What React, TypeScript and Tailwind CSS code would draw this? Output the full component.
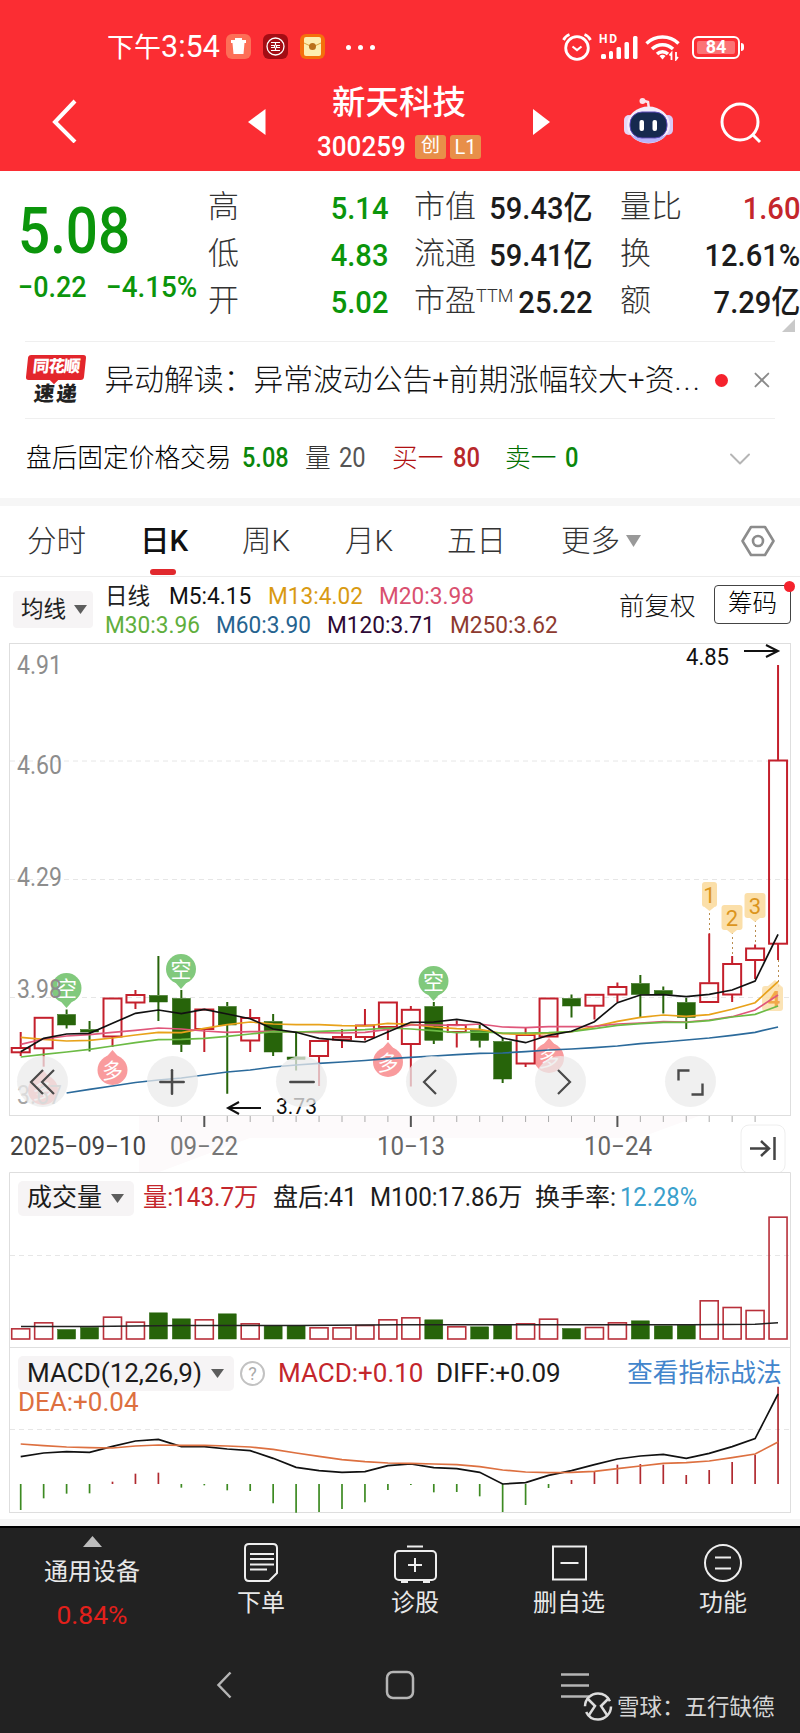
import type { ReactNode } from "react";
import { AlarmClock, ChevronDown, ChevronLeft, ChevronRight, ChevronsLeft, Minus, Plus, X } from "lucide-react";

const UP = "#c4202c";
const DOWN = "#27640a";

// [up, high, body top, body bottom, low]
const CANDLES: [number, number, number, number, number][] = [
  [1, 1032, 1047.5, 1052.3, 1056],
  [1, 1017.3, 1017.3, 1048.3, 1066.7],
  [0, 1009.5, 1014, 1025, 1028.5],
  [0, 1021, 1029, 1032, 1051.5],
  [1, 998, 998, 1036.5, 1047],
  [1, 990, 994.5, 1002.5, 1009],
  [0, 956, 995, 1002, 1021],
  [0, 990, 998, 1044.5, 1052],
  [1, 1009, 1009, 1029, 1052],
  [0, 1002, 1006, 1025, 1093.7],
  [1, 1009, 1017.5, 1040.5, 1052],
  [0, 1014, 1021, 1052, 1056],
  [0, 1033, 1056.5, 1059.5, 1070.5],
  [1, 1040.5, 1040.5, 1056, 1086],
  [1, 1029, 1036.5, 1039.5, 1048],
  [1, 1009, 1025, 1037, 1040.5],
  [1, 1002, 1002, 1027, 1040],
  [1, 1006, 1009.3, 1044, 1086.5],
  [0, 1002, 1006, 1040.3, 1044],
  [1, 1020.5, 1024.5, 1032, 1047.5],
  [0, 1024.5, 1030, 1040.5, 1047.5],
  [0, 1037.5, 1041, 1079, 1083],
  [1, 1027.5, 1034.5, 1063.5, 1067],
  [1, 998, 998, 1036.5, 1036.5],
  [0, 994.5, 998, 1006, 1017.5],
  [1, 994.3, 994.3, 1005.7, 1019.5],
  [1, 982.5, 986.5, 994.5, 1002],
  [0, 975, 983, 994.5, 1017.5],
  [0, 986.5, 990, 994.5, 1013.5],
  [0, 998, 1002, 1017.5, 1029],
  [1, 933.5, 982.7, 1002, 1002],
  [1, 956, 963.5, 994.5, 1002],
  [1, 944.5, 948, 960, 979],
  [1, 665, 760, 943.7, 960],
];

const MA_LINES = [
  { color: "#2b6a9b", ys: [0, 0, 1093, 1089.3, 1086, 1082.5, 1080, 1078, 1075, 1072, 1070, 1067, 1065, 1063.3, 1062, 1060.5, 1058.7, 1057.3, 1056, 1054.7, 1053.3, 1053, 1051.7, 1050, 1049, 1047.7, 1046, 1043.7, 1042, 1040, 1038, 1035.3, 1032.3, 1027] },
  { color: "#e8a21a", ys: [1037.3, 1039.3, 1041, 1040.3, 1038, 1035, 1032.3, 1032.7, 1028.3, 1024.7, 1022, 1024, 1024.7, 1024.7, 1025.7, 1026, 1023.3, 1024.3, 1027, 1028.7, 1029.3, 1033.7, 1034.3, 1033.3, 1031.7, 1026.7, 1021.3, 1017.3, 1015, 1016.3, 1014.7, 1009.3, 1002.7, 981.7] },
  { color: "#e0567a", ys: [1044.3, 1039, 1036, 1034.7, 1032.3, 1030.3, 1028, 1029, 1031, 1032.3, 1031.7, 1031.3, 1032, 1032.7, 1033, 1032.3, 1029.3, 1025, 1025, 1025.3, 1024, 1027, 1027.7, 1026.7, 1026.7, 1026.3, 1024, 1023, 1021.7, 1022, 1020, 1016.7, 1010, 995] },
  { color: "#6cbb45", ys: [1057, 1054.3, 1052, 1049.3, 1046, 1042.7, 1039.7, 1039.3, 1038.3, 1036.3, 1034, 1031.7, 1032, 1031.3, 1030.7, 1029.7, 1028, 1029, 1030.7, 1032.7, 1032, 1033, 1033, 1032.7, 1031.7, 1028.7, 1025.3, 1023.7, 1022.3, 1022.3, 1020.7, 1017, 1014.3, 1006] },
  { color: "#111", ys: [1051.7, 1038.3, 1034, 1033.3, 1023.3, 1013.3, 1010, 1013.7, 1009.3, 1014, 1018.7, 1029, 1032.3, 1038.3, 1040.3, 1042, 1032, 1022.3, 1022, 1019.3, 1022.7, 1038, 1042.7, 1035.3, 1031.3, 1021.7, 1002.7, 995, 994.7, 996.7, 994.3, 990, 981, 934.3] },
];

const VOLUMES = [32, 50, 30, 36, 67, 52, 80, 62, 59, 77, 47, 42, 42, 35, 35, 42, 59, 65, 59, 38, 38, 43, 47, 61, 33, 36, 50, 56, 41, 43, 116, 96, 87, 367];

const DIFF = [890, 879, 875, 877, 859, 843, 838, 860, 860, 867, 872, 895, 922, 932, 937, 935, 917, 912, 923, 926, 937, 972, 968, 946, 932, 914, 897, 888, 883, 895, 880, 860, 836, 702];
const DEA = [852, 857, 861, 863, 864, 858, 855, 856, 856, 858, 861, 868, 879, 889, 899, 905, 909, 910, 912, 914, 920, 930, 936, 938, 937, 934, 926, 918, 910, 908, 903, 893, 882, 846];
const HIST = [-78, -43, -29, -28, 7, 31, 34, -11, -4, -19, -21, -58, -86, -84, -75, -55, -18, -3, -25, -24, -37, -84, -63, -12, 12, 38, 58, 60, 58, 27, 42, 66, 88, 292];

const FONT = "font-['Roboto','Noto_Sans_CJK_SC',sans-serif]";

const cx = (i: number) => 20.7 + i * 22.95;
const points = (ys: number[]) =>
  ys
    .map((y, i) => (y ? `${cx(i)},${y}` : ""))
    .filter(Boolean)
    .join(" ");

function Label(props: { x: number; y: number; w: number; size: number; fill: string; children: string }) {
  return (
    <text x={props.x} y={props.y} fontSize={props.size} fill={props.fill} textLength={props.w} lengthAdjust="spacingAndGlyphs">
      {props.children}
    </text>
  );
}

function StatusBar() {
  return (
    <div className="flex h-[94px] items-center pl-[107px] pr-[56px] text-white">
      <span className="w-[119px] whitespace-nowrap text-[27px]">
        下午<span className="text-[30.5px]">3:54</span>
      </span>
      <svg className="h-[26px] w-[100px]" viewBox="0 0 100 26">
        <rect width="25" height="25" rx="6" fill="#fd6f57" />
        <path d="M5 6h15v3H5zM9 4h7v2H9zM6.500 9h12l-1 11h-10z" fill="#fff" />
        <rect x="37" width="25" height="25" rx="6" fill="#a30d14" />
        <circle cx="49.500" cy="12.500" r="8.500" fill="none" stroke="#fff" strokeWidth="1.300" />
        <path d="M45 8.500h9M45 16.500h9M49.500 8.500v3M49.500 13.500v3M45 11.500h3.500v2H45M54 11.500h-3.500v2H54" fill="none" stroke="#fff" strokeWidth="1.200" />
        <rect x="74" width="25" height="25" rx="6" fill="#f4700c" />
        <rect x="78" y="3" width="17" height="19" rx="2" fill="#fdeeb0" />
        <path d="M78 9l8.500 4L95 9" fill="none" stroke="#dfa53c" />
        <circle cx="86.500" cy="12.500" r="3.500" fill="#b9711b" />
      </svg>
      <div className="ml-[20px] flex gap-[7px]">
        <i className="size-[5px] rounded-full bg-white" />
        <i className="size-[5px] rounded-full bg-white" />
        <i className="size-[5px] rounded-full bg-white" />
      </div>
      <div className="ml-auto flex items-center">
        <svg className="h-[30px] w-[30px]" viewBox="0 0 30 30" fill="none" stroke="#fff" strokeWidth="2.800">
          <circle cx="15" cy="16" r="11.300" />
          <path d="M1.500 8q2-4 6-5.500M28.500 8q-2-4-6-5.500" />
          <path d="M10.500 14.500l4.500 3.500 4.500-3.500" strokeWidth="2.200" />
        </svg>
        <svg className="ml-[7px] h-[28px] w-[40px]" viewBox="0 0 40 28" fill="#fff">
          <text x="0" y="10" fontSize="12" fontWeight="700" textLength="18">HD</text>
          <rect x="2" y="21" width="5" height="5" rx="1.500" />
          <rect x="10" y="18" width="4" height="8" rx="1.500" />
          <rect x="17.500" y="14" width="4.500" height="12" rx="1.500" />
          <rect x="25.500" y="9" width="4.500" height="17" rx="1.500" />
          <rect x="34" y="3" width="4.500" height="23" rx="1.500" />
        </svg>
        <svg className="ml-[6px] h-[28px] w-[36px]" viewBox="0 0 36 28" fill="none" stroke="#fff" strokeWidth="3.400">
          <path d="M1.500 10.500a23 23 0 0 1 32 0" />
          <path d="M7 16a15 15 0 0 1 21 0" />
          <path d="M12 21a8 8 0 0 1 11 0" />
          <path d="M17.500 26.500l-3-3.500a4.500 4.500 0 0 1 6 0z" fill="#fff" stroke="none" />
          <path d="M26.500 27v-7l-2 2.500M31 19v7.500l2-2.500" strokeWidth="1.800" />
        </svg>
        <div className="ml-[11px] flex h-[23px] w-[48px] items-center rounded-[6px] border-2 border-white p-[3px]">
          <div className="flex h-full w-full items-center justify-center rounded-[2px] bg-[#fb7375] text-[18px] font-bold leading-none">84</div>
        </div>
        <i className="ml-[1px] h-[8px] w-[3px] rounded-r bg-white" />
      </div>
    </div>
  );
}

function TitleBar() {
  return (
    <div className="flex h-[77px] items-center text-white">
      <svg className="ml-[50px] mb-[26px] h-[46px] w-[28px]" viewBox="0 0 28 46" fill="none" stroke="#fff" strokeWidth="4">
        <path d="M25 4L5 25l20 20" />
      </svg>
      <svg className="ml-[170px] mb-[22px] h-[26px] w-[18px]" viewBox="0 0 18 26" fill="#fff">
        <path d="M17.500 0v26L0 13z" />
      </svg>
      <div className="ml-[45px] mb-[14px] flex w-[176px] flex-col items-center">
        <div className="h-[42px] text-[33.5px] font-medium leading-[42px]">新天科技</div>
        <div className="flex h-[46px] w-[164px] items-center">
          <span className="w-[98px]">
            <span className="inline-block origin-left scale-x-[0.93] text-[28px] font-medium">300259</span>
          </span>
          <span className="flex h-[24px] w-[31px] items-center justify-center rounded-[3px] bg-[#e88f49] text-[19px]">创</span>
          <span className="ml-[4px] flex h-[24px] w-[31px] items-center justify-center rounded-[3px] bg-[#e88f49] text-[20px]">L1</span>
        </div>
      </div>
      <svg className="ml-[46px] mb-[22px] h-[26px] w-[18px]" viewBox="0 0 18 26" fill="#fff">
        <path d="M0 0v26l17-13z" />
      </svg>
      <svg className="ml-[73px] mb-[23px] h-[48px] w-[50px]" viewBox="0 0 50 48">
        <path d="M17 3l7 2 1 7" fill="none" stroke="#fbe3ec" strokeWidth="2.500" />
        <circle cx="18.500" cy="4" r="3" fill="#fbe3ec" />
        <rect x="0" y="18" width="10" height="20" rx="5" fill="#e6d7f7" />
        <rect x="39" y="18" width="10" height="20" rx="5" fill="#d9c9f5" />
        <ellipse cx="24.500" cy="28" rx="21.500" ry="18.500" fill="#f4ecfb" />
        <path d="M6 37c8 12 29 12 37 0-8 6-29 6-37 0z" fill="#b9b4fa" />
        <rect x="6" y="15" width="37" height="26" rx="12" fill="#16294f" stroke="#5a49b8" strokeWidth="1" />
        <rect x="15.500" y="23" width="4.500" height="11" rx="2" fill="#fff" />
        <rect x="28.500" y="23" width="4.500" height="11" rx="2" fill="#fff" />
      </svg>
      <svg className="ml-[46px] mb-[20px] h-[42px] w-[42px]" viewBox="0 0 42 42" fill="none" stroke="#fff" strokeWidth="3">
        <circle cx="20" cy="20" r="18" />
        <path d="M32 32l8 8" />
      </svg>
    </div>
  );
}

function Stat(props: { label: ReactNode; value: string; color: string }) {
  return (
    <div className="flex h-[47px] items-center justify-between whitespace-nowrap">
      <span className="w-0 text-[31px] font-light text-[#333]">{props.label}</span>
      <span className={`${props.color} inline-block origin-right scale-x-[0.91] text-[32px] font-medium`}>{props.value}</span>
    </div>
  );
}

function Quote() {
  return (
    <div className="relative flex h-[170px] pt-[13px]">
      <div className="w-[208px] pl-[18px] text-[#0b950b] whitespace-nowrap">
        <div className="h-[70px] w-[128px] origin-left scale-x-[0.87] pt-[12px] text-[65px] font-medium leading-[70px]">5.08</div>
        <div className="mt-[13px] flex text-[29px] font-medium leading-[40px]">
          <span className="w-[88px]">
            <span className="inline-block origin-left scale-x-[0.93]">−0.22</span>
          </span>
          <span className="inline-block origin-left scale-x-[0.96]">−4.15%</span>
        </div>
      </div>
      <div className="w-[180px]">
        <Stat label="高" value="5.14" color="text-[#0b950b]" />
        <Stat label="低" value="4.83" color="text-[#0b950b]" />
        <Stat label="开" value="5.02" color="text-[#0b950b]" />
      </div>
      <div className="ml-[26px] w-[179px]">
        <Stat label="市值" value="59.43亿" color="text-[#1c1c1c]" />
        <Stat label="流通" value="59.41亿" color="text-[#1c1c1c]" />
        <Stat label={<>市盈<sup className="text-[18px]">TTM</sup></>} value="25.22" color="text-[#1c1c1c]" />
      </div>
      <div className="ml-[27px] w-[180px]">
        <Stat label="量比" value="1.60" color="text-[#c4262c]" />
        <Stat label="换" value="12.61%" color="text-[#1c1c1c]" />
        <Stat label="额" value="7.29亿" color="text-[#1c1c1c]" />
      </div>
      <svg className="absolute right-[5px] bottom-[9px] size-[13px]" viewBox="0 0 13 13">
        <path d="M13 0v13H0z" fill="#c9c9c9" />
      </svg>
    </div>
  );
}

function News() {
  return (
    <div className="mx-[25px] flex h-[78px] items-center border-y border-[#efefef]">
      <div className="relative flex w-[62px] flex-col items-center">
        <div className="flex h-[25px] w-[58px] -skew-x-6 items-center justify-center rounded-[3px] bg-[#e3262c] text-[16.5px] font-black leading-none tracking-[-1px] text-white">
          同花顺
        </div>
        <i className="absolute top-[22px] left-[26px] size-[6px] rotate-45 bg-[#e3262c]" />
        <div className="mt-[3px] flex -skew-x-6 gap-[2px] text-[20.500px] font-black leading-[22px] text-[#222]">
          <span>速</span>
          <span>递</span>
        </div>
      </div>
      <div className="ml-[18px] w-[604px] overflow-hidden whitespace-nowrap text-[29.8px] font-light text-[#111]">
        异动解读：异常波动公告+前期涨幅较大+资<span className="tracking-[2px]">...</span>
      </div>
      <i className="ml-[12px] size-[13px] rounded-full bg-[#f5222d]" />
      <X className="ml-[21px]" size={26} strokeWidth={1.700} color="#8a8a8a" />
    </div>
  );
}

function AfterHours() {
  return (
    <div className="flex h-[79px] items-center whitespace-nowrap pl-[26px] text-[25.7px] text-[#222]">
      <span className="w-[216px] font-light text-black">盘后固定价格交易</span>
      <span className="w-[63px] text-[27px] font-medium text-[#0b870b]">
        <span className="inline-block origin-left scale-x-[0.87]">5.08</span>
      </span>
      <span className="w-[34px] font-light text-[#333]">量</span>
      <span className="w-[53px] text-[27px] text-[#555]">
        <span className="inline-block origin-left scale-x-[0.88]">20</span>
      </span>
      <span className="w-[61px] font-light text-[#b01012]">买一</span>
      <span className="w-[52px] text-[27px] font-medium text-[#b8282a]">
        <span className="inline-block origin-left scale-x-[0.88]">80</span>
      </span>
      <span className="w-[60px] font-light text-[#006f00]">卖一</span>
      <span className="w-[40px] text-[27px] font-medium text-[#0b870b]">
        <span className="inline-block origin-left scale-x-[0.88]">0</span>
      </span>
      <ChevronDown className="ml-[117px]" size={36} strokeWidth={1.300} color="#b5b5b5" />
    </div>
  );
}

function Tabs() {
  return (
    <div className="flex h-[71px] items-center border-b border-[#ececec] pl-[27px] text-[29.5px] font-light text-[#333]">
      <span className="w-[113px]">分时</span>
      <span className="relative w-[102px] font-medium text-[#111]">
        日K
        <i className="absolute top-[50px] left-[10px] h-[6px] w-[26px] rounded-full bg-[#e1282d]" />
      </span>
      <span className="w-[103px]">周K</span>
      <span className="w-[102px]">月K</span>
      <span className="w-[114px]">五日</span>
      <span className="w-[65px]">更多</span>
      <svg className="h-[12px] w-[15px]" viewBox="0 0 15 12">
        <path d="M0 0h15l-7.500 12z" fill="#999" />
      </svg>
      <svg className="ml-[100px] h-[32px] w-[34px]" viewBox="0 0 34 32" fill="none" stroke="#8c8c8c" strokeWidth="2.600">
        <path d="M10 2h14l8.500 14L24 30H10L1.500 16z" strokeLinejoin="round" />
        <circle cx="17" cy="16" r="5" />
      </svg>
    </div>
  );
}

function Caret() {
  return (
    <svg className="h-[9px] w-[13px]" viewBox="0 0 13 9">
      <path d="M0 0h13L6.500 9z" fill="#5d5d5d" />
    </svg>
  );
}

function Legend() {
  const ma = "inline-block origin-left scale-x-[0.925]";
  return (
    <div className="flex h-[66px] text-[24.500px] whitespace-nowrap">
      <div className="mt-[14px] ml-[13px] flex h-[37px] w-[80px] items-center gap-[8px] rounded-[4px] bg-[#f6f4f5] pl-[8px] text-[22.5px] text-[#222]">
        均线
        <Caret />
      </div>
      <div className="ml-[12px] w-[490px] pt-[5px]">
        <div className="flex h-[29px] items-center">
          <span className="w-[64px] text-[22.5px] text-[#222]">日线</span>
          <span className="w-[99px] text-[#111]"><span className={ma}>M5:4.15</span></span>
          <span className="w-[111px] text-[#d99a12]"><span className={ma}>M13:4.02</span></span>
          <span className="text-[#d9506f]"><span className={ma}>M20:3.98</span></span>
        </div>
        <div className="flex h-[29px] items-center">
          <span className="w-[111px] text-[#5fae3d]"><span className={ma}>M30:3.96</span></span>
          <span className="w-[111px] text-[#26638f]"><span className={ma}>M60:3.90</span></span>
          <span className="w-[123px] text-[#2e0a35]"><span className={ma}>M120:3.71</span></span>
          <span className="text-[#8d3a2f]"><span className={ma}>M250:3.62</span></span>
        </div>
      </div>
      <div className="mt-[9px] ml-[24px] flex h-[40px] w-[95px] items-center text-[25.500px] font-light text-[#111]">前复权</div>
      <div className="relative mt-[8px] flex h-[39px] w-[77px] items-center justify-center rounded-[4px] border border-[#444] text-[24.500px] font-light text-black">
        筹码
        <i className="absolute -top-[5px] -right-[5px] size-[11px] rounded-full bg-[#f5222d]" />
      </div>
    </div>
  );
}

function Pin(props: { x: number; y: number; up?: boolean; children: string }) {
  const { x, y, up } = props;
  return (
    <g opacity="0.85">
      <circle cx={x} cy={y} r="15" fill={up ? "#f98a8c" : "#6cc066"} />
      <path d={up ? `M${x - 7} ${y - 12}L${x} ${y - 20}l7 8z` : `M${x - 7} ${y + 12}L${x} ${y + 20}l7-8z`} fill={up ? "#f98a8c" : "#6cc066"} />
      <text x={x} y={y + 8} fontSize="21" fill="#fff" textAnchor="middle">
        {props.children}
      </text>
    </g>
  );
}

function Flag(props: { x: number; y: number; w: number; children: string }) {
  const { x, y, w } = props;
  return (
    <g>
      <rect x={x - w / 2} y={y} width={w} height="25" rx="3" fill="#fbdfa9" />
      <path d={`M${x - 5} ${y + 25}l5 4 5-4z`} fill="#fbdfa9" />
      <text x={x} y={y + 21} fontSize="22" fill="#dc951d" textAnchor="middle">
        {props.children}
      </text>
    </g>
  );
}

// viewBoxes keep the y values of the page, so data and frames share one scale
function PriceChart() {
  return (
    <svg className="block h-[529px] w-[800px]" viewBox="0 643 800 529">
      <path d="M139 1116h560l-60 22H250l-96 36h-15z" fill="#fdfafb" />
      <path d="M10 761H790M10 879.500H790M10 997.500H790" stroke="#e6e6e6" strokeDasharray="5 4" />
      <rect x="9.500" y="643.500" width="781" height="472" fill="none" stroke="#dedede" />
      <Label x={17} y={674} w={45} size={25} fill="#8d8d8d">4.91</Label>
      <Label x={17} y={774} w={45} size={25} fill="#8d8d8d">4.60</Label>
      <Label x={17} y={886} w={45} size={25} fill="#8d8d8d">4.29</Label>

      <Pin x={66.500} y={988}>空</Pin>
      <Pin x={181} y={969}>空</Pin>
      <Pin x={433.500} y={981}>空</Pin>
      <Pin x={112.500} y={1070} up>多</Pin>
      <Pin x={43} y={1090} up>多</Pin>
      <Pin x={388} y={1062} up>多</Pin>
      <Pin x={549} y={1058} up>多</Pin>
      <Label x={17} y={998} w={45} size={25} fill="#8d8d8d">3.98</Label>
      <Label x={17} y={1104} w={45} size={25} fill="#a5a5a5">3.67</Label>

      <path d="M709.500 908V934M732.500 932V956M755.500 920V945M778.500 960V990" stroke="#b98d50" strokeDasharray="2 3" />
      <g opacity="0.85">
        <rect x="762" y="986" width="21" height="25" rx="3" fill="#fbdfa9" />
        <path d="M768 986l7-6 6 6z" fill="#fbdfa9" />
        <text x="774" y="1007" fontSize="22" fontWeight="700" fill="#f09a2a" textAnchor="middle">4</text>
      </g>
      {CANDLES.map(([up, high, top, bottom, low], i) => (
        <g key={i} stroke={up ? UP : DOWN} strokeWidth="2">
          <path d={`M${cx(i)} ${high}V${top}M${cx(i)} ${bottom}V${low}`} />
          <rect x={cx(i) - 9} y={top + 0.500} width="18" height={bottom - top - 0.500} fill={up ? "none" : DOWN} strokeWidth={up ? 2 : 0.500} />
        </g>
      ))}
      {MA_LINES.map((l) => (
        <polyline key={l.color} points={points(l.ys)} fill="none" stroke={l.color} strokeWidth="1.700" />
      ))}

      <Flag x={709.500} y={882} w={15}>1</Flag>
      <Flag x={732} y={905} w={21}>2</Flag>
      <Flag x={755} y={893} w={21}>3</Flag>

      <Label x={686} y={665} w={43} size={23} fill="#111">4.85</Label>
      <path d="M744 651h34M766 645l12 6-12 6" fill="none" stroke="#111" strokeWidth="2" />
      <Label x={276} y={1114} w={41} size={22} fill="#111">3.73</Label>
      <path d="M261 1108h-33M239 1102l-11 6 11 6" fill="none" stroke="#111" strokeWidth="2" />

      {CANDLES.map((_, i) =>
        i > 5 && i < 33 ? (
          <path key={i} d={`M${cx(i)} 1116v${i % 9 === 8 ? 11 : 6}`} stroke={i % 9 === 8 ? "#555" : "#aaa"} strokeWidth={i % 9 === 8 ? 2 : 1} />
        ) : null
      )}
      <Label x={10} y={1155} w={136} size={25} fill="#444">2025−09−10</Label>
      <Label x={170} y={1155} w={68} size={25} fill="#777">09−22</Label>
      <Label x={377} y={1155} w={68} size={25} fill="#666">10−13</Label>
      <Label x={584} y={1155} w={68} size={25} fill="#666">10−24</Label>
      <rect x="741" y="1125" width="44" height="48" rx="8" fill="#fff" stroke="#eee" />
      <path d="M750 1148.500h18M761 1141l8 7.500-8 7.500M774.500 1137v23" fill="none" stroke="#444" strokeWidth="2.500" />
    </svg>
  );
}

function ChartButtons() {
  const cls = "flex size-[51px] items-center justify-center rounded-full bg-[#ebebeb]/75";
  return (
    <div className="absolute top-[413px] left-[17px] flex gap-[78.5px] text-[#4a4a4a]">
      <div className={cls}>
        <svg className="size-[28px]" viewBox="0 0 28 28" fill="none" stroke="currentColor" strokeWidth="2.200">
          <path d="M14 2L2 14l12 12M25 2L13 14l12 12" />
        </svg>
      </div>
      <div className={cls}><Plus size={40} strokeWidth={1.500} /></div>
      <div className={cls}><Minus size={40} strokeWidth={1.500} /></div>
      <div className={cls}>
        <svg className="size-[28px]" viewBox="0 0 28 28" fill="none" stroke="currentColor" strokeWidth="2.200">
          <path d="M19 2L7 14l12 12" />
        </svg>
      </div>
      <div className={cls}>
        <svg className="size-[28px]" viewBox="0 0 28 28" fill="none" stroke="currentColor" strokeWidth="2.200">
          <path d="M11 2l12 12-12 12" />
        </svg>
      </div>
      <div className={cls}>
        <svg className="size-[28px]" viewBox="0 0 28 28" fill="none" stroke="currentColor" strokeWidth="2.400">
          <path d="M2.500 12.500V2.500h11M26.500 15.500v11h-11" />
        </svg>
      </div>
    </div>
  );
}

function VolumePanel() {
  return (
    <div className="relative h-[175px]">
      <svg className="block h-[175px] w-[800px]" viewBox="0 1172 800 175">
        <path d="M9.500 1347V1172.500H790.500V1347" fill="none" stroke="#dedede" />
        <path d="M10 1255.500H790" stroke="#e6e6e6" strokeDasharray="5 4" />
        {VOLUMES.map((v, i) => {
          const up = CANDLES[i][0];
          const h = v / 3;
          return <rect key={i} x={cx(i) - 9} y={1339.5 - h} width="18" height={h - 0.500} fill={up ? "none" : DOWN} stroke={up ? "#b8303a" : DOWN} strokeWidth={up ? 1.600 : 0.500} />;
        })}
        <path d="M21 1326.500H90L180 1325.500H300L400 1324.700H690L755 1324.300 778 1322.700" fill="none" stroke="#222" strokeWidth="1.500" />
      </svg>
      <div className="absolute top-[8px] left-[18px] flex h-[36px] items-center whitespace-nowrap text-[25px] text-[#1c1c1c]">
        <div className="flex h-[35px] w-[116px] items-center gap-[9px] rounded-[5px] bg-[#f6f4f5] pl-[9px]">
          成交量
          <Caret />
        </div>
        <span className="ml-[9px] w-[130px] text-[#c4262c]">
          <span className="inline-block origin-left scale-x-[0.97]">量:143.7万</span>
        </span>
        <span className="w-[97px]">盘后:41</span>
        <span className="w-[165px]">
          <span className="inline-block origin-left scale-x-[0.965]">M100:17.86万</span>
        </span>
        <span className="w-[85px]">换手率:</span>
        <span className="inline-block origin-left scale-x-[0.95] text-[#3aa0cc]">12.28%</span>
      </div>
    </div>
  );
}

function MacdPanel() {
  const y = (v: number) => 1160 + v / 3;
  return (
    <div className="relative h-[179px]">
      <svg className="block h-[179px] w-[800px]" viewBox="0 1347 800 179">
        <path d="M0 1519h800v7H0z" fill="#f5f5f5" />
        <rect x="9.500" y="1347.500" width="781" height="165" fill="none" stroke="#dedede" />
        <path d="M10 1429.500H790" stroke="#e6e6e6" strokeDasharray="5 4" />
        {HIST.map((h, i) => (
          <path key={i} d={`M${cx(i)} 1484v${-h / 3}`} stroke={h > 0 ? "#b02a30" : "#3d8a22"} strokeWidth="1.700" />
        ))}
        <polyline points={points(DIFF.map(y))} fill="none" stroke="#111" strokeWidth="1.700" />
        <polyline points={points(DEA.map(y))} fill="none" stroke="#dd7040" strokeWidth="1.700" />
      </svg>
      <div className="absolute top-[8px] left-[18px] flex h-[36px] items-center whitespace-nowrap text-[26px] text-[#1c1c1c]">
        <div className="flex h-[35px] w-[216px] items-center rounded-[5px] bg-[#f6f4f5] pl-[9px]">
          <span className="w-[184px]">MACD(12,26,9)</span>
          <Caret />
        </div>
        <span className="ml-[6px] flex size-[25px] items-center justify-center rounded-full border-2 border-[#c2c2c2] text-[18px] text-[#aaa]">?</span>
        <span className="ml-[13px] w-[158px] text-[#c4262c]">MACD:+0.10</span>
        <span className="w-[191px]">DIFF:+0.09</span>
        <span className="text-[25.800px] text-[#4285cc]">查看指标战法</span>
      </div>
      <div className="absolute top-[39px] left-[18px] text-[26px] leading-[32px] text-[#dd7040]">DEA:+0.04</div>
    </div>
  );
}

const ACTIONS = [
  {
    name: "下单",
    icon: (
      <>
        <path d="M7 2h24q4 0 4 4v25l-8 8H7q-4 0-4-4V6q0-4 4-4z" />
        <path d="M8 12h24M8 17h24M8 22.500h24M8 27.500h17" />
      </>
    ),
  },
  {
    name: "诊股",
    icon: (
      <>
        <path d="M11 4.500h16M19 16v14M12 23h14" />
        <rect x="-1" y="9" width="41" height="29" rx="4" />
        <path d="M5 39.500h7M27 39.500h7" strokeWidth="3" />
      </>
    ),
  },
  {
    name: "删自选",
    icon: (
      <>
        <rect x="3" y="4.500" width="33" height="33" />
        <path d="M10.500 21h18" />
      </>
    ),
  },
  {
    name: "功能",
    icon: (
      <>
        <circle cx="19" cy="21" r="18" />
        <path d="M11 15.500h16M11 26.500h16" />
      </>
    ),
  },
];

function BottomBar() {
  return (
    <div className="h-[207px] border-t-2 border-black bg-[#222] text-[#e8e8e8]">
      <div className="flex h-[112px] pt-[8px] text-[24px]">
        <div className="flex w-[184px] flex-col items-center">
          <svg className="h-[11px] w-[19px]" viewBox="0 0 19 11">
            <path d="M9.500 0L19 11H0z" fill="#bdbdbd" />
          </svg>
          <div className="mt-[9px] leading-[32px]">通用设备</div>
          <div className="mt-[11px] text-[26.500px] leading-[32px] text-[#e3201b]">0.84%</div>
        </div>
        {ACTIONS.map((a) => (
          <div key={a.name} className="flex w-[154px] flex-col items-center">
            <svg className="mt-[6px] h-[42px] w-[38px] overflow-visible" viewBox="0 0 38 42" fill="none" stroke="#eee" strokeWidth="2">
              {a.icon}
            </svg>
            <div className="mt-[3px] leading-[32px]">{a.name}</div>
          </div>
        ))}
      </div>
      <div className="relative h-[93px]">
        <svg className="block h-[93px] w-[800px]" viewBox="0 1640 800 93" fill="none" stroke="#b5b5b5" strokeWidth="2.500">
          <path d="M230.500 1672.500L218.500 1685l12 12.500" />
          <rect x="387" y="1672" width="26" height="26" rx="6" />
          <path d="M561 1674.500h28M561 1685.500h28M561 1696.500h28" />
          <circle cx="598" cy="1706.500" r="13" stroke="#ddd" strokeWidth="2.500" strokeDasharray="35 5.800" />
          <path d="M587 1698l8 8-6 9M609 1698l-8 8 6 9" stroke="#ddd" />
        </svg>
        <div className="absolute top-[50px] left-[617px] whitespace-nowrap text-[22.500px] leading-[34px] text-[#d5d5d5]">雪球：五行缺德</div>
      </div>
    </div>
  );
}

export default function App() {
  return (
    <div className={`${FONT} w-[800px] overflow-hidden bg-white`}>
      <div className="h-[171px] bg-[#fb2d33]">
        <StatusBar />
        <TitleBar />
      </div>
      <Quote />
      <News />
      <AfterHours />
      <div className="h-[8px] bg-[#f6f6f6]" />
      <Tabs />
      <Legend />
      <div className="relative">
        <PriceChart />
        <ChartButtons />
      </div>
      <VolumePanel />
      <MacdPanel />
      <BottomBar />
    </div>
  );
}
